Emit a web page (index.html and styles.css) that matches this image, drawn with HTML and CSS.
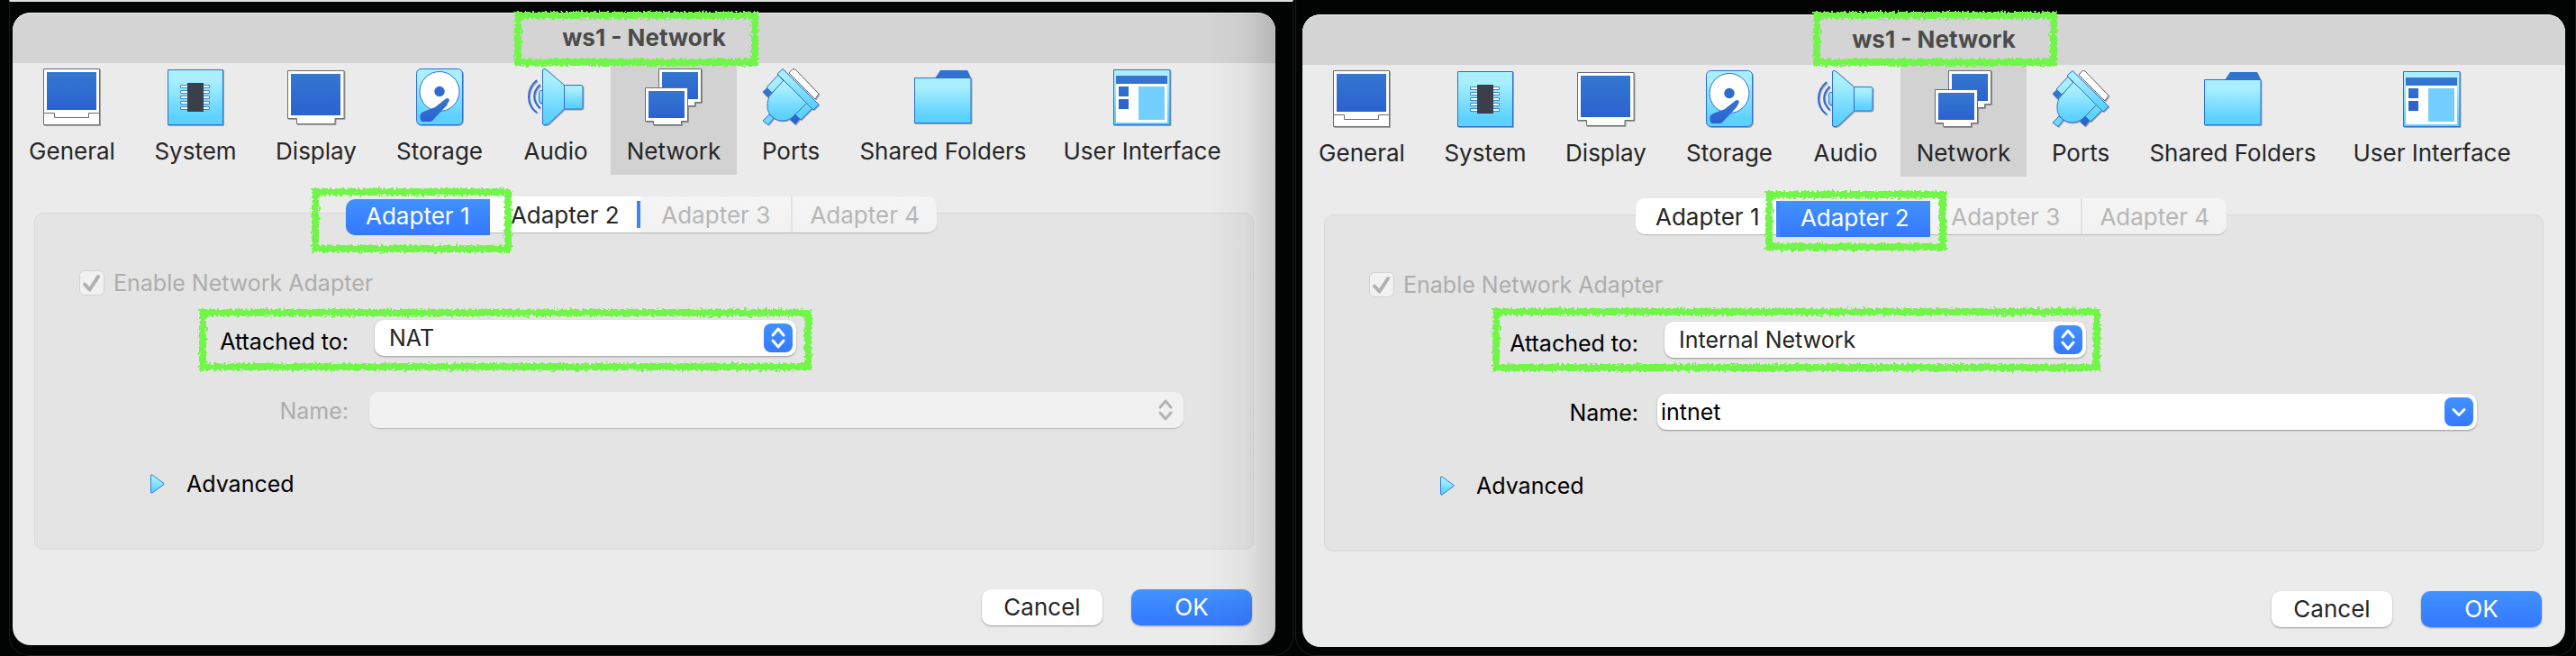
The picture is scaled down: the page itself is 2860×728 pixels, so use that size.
FILE: index.html
```html
<!DOCTYPE html>
<html lang="en">
<head>
<meta charset="utf-8">
<title>ws1 - Network</title>
<link rel="stylesheet" href="styles.css">
</head>
<body>
<svg class="sprite" width="0" height="0" aria-hidden="true">
  <defs>
    <linearGradient id="cyan" x1="0" y1="0" x2="0" y2="1"><stop offset="0.2" stop-color="#a9efff"/><stop offset="0.85" stop-color="#5dd2ff"/></linearGradient>
    <linearGradient id="blue" x1="0" y1="0" x2="0" y2="1"><stop offset="0" stop-color="#3577d0"/><stop offset="1" stop-color="#2a62d0"/></linearGradient>
    <filter id="rough" x="-5%" y="-20%" width="110%" height="140%">
      <feTurbulence type="fractalNoise" baseFrequency="0.35" numOctaves="2" seed="4" result="n"/>
      <feDisplacementMap in="SourceGraphic" in2="n" scale="7" xChannelSelector="R" yChannelSelector="G"/>
    </filter>
  </defs>
  <symbol id="i-general" viewBox="0 0 64 64">
    <path d="M.5.5h62v62H.5z" fill="#fff" stroke="#6c6c6c"/>
    <path d="M4 4h55v42H4z" fill="url(#blue)"/>
    <path d="M.5 49.5h12v5h38v-5h12" fill="none" stroke="#6c6c6c"/>
  </symbol>
  <symbol id="i-system" viewBox="0 0 64 64">
    <path d="M1.500 1.500h61v61h-61z" fill="url(#cyan)" stroke="#2a6fd2"/>
    <path d="M15.500 18.500h32v3h-32zM15.500 24.500h32v3h-32zM15.500 30.500h32v3h-32zM15.500 36.500h32v3h-32zM15.500 42.500h32v3h-32z" fill="#fff" stroke="#3c86c8"/>
    <path d="M23 16h18v32H23z" fill="#3a3f4a"/>
  </symbol>
  <symbol id="i-display" viewBox="0 0 64 64">
    <path d="M.5 2.500h62.500v53H53v6H10.500v-6H.5z" fill="#fff" stroke="#6c6c6c"/>
    <path d="M4 6h55v46H4z" fill="url(#blue)"/>
  </symbol>
  <symbol id="i-storage" viewBox="0 0 64 64">
    <rect x="6.500" y=".5" width="51" height="62" rx="5" fill="url(#cyan)" stroke="#2a6fd2"/>
    <circle cx="32" cy="25.500" r="22" fill="#fff" stroke="#2a6fd2"/>
    <circle cx="32" cy="25.500" r="5.700" fill="#2d6bd2"/>
    <path d="M39 33.500Q42 32 43 35L40 41 24 58Q23 59 21 59H13Q10 58 10.500 52 11 49 14 48L27 43Z" fill="url(#blue)"/>
  </symbol>
  <symbol id="i-audio" viewBox="0 0 64 64">
    <path d="M11 13C-1 23-1 40 11 49M14.500 18C6 26 6 36 14.500 44" fill="none" stroke="#2d6bd2" stroke-width="2"/>
    <path d="M17.500 24.500H16Q13.500 24.500 13.500 27V36Q13.500 38.500 16 38.500H17.500M41.500 18.500H60Q62 18.500 62 20.500V43Q62 45 60 45H41.500Z" fill="url(#cyan)" stroke="#2a6fd2"/>
    <path d="M17.500 2Q17.500.5 19 .5H20L23 2.500 41.500 18.500V45L24 61.500 21 62.500H19Q17.500 62.500 17.500 61Z" fill="url(#cyan)" stroke="#2a6fd2"/>
  </symbol>
  <symbol id="i-network" viewBox="0 0 64 64">
    <path d="M15.500.5h47v37h-7v4h-32v-4h-8z" fill="#fff" stroke="#6c6c6c"/>
    <path d="M19 4h40v30H19z" fill="url(#blue)"/>
    <path d="M.5 21.500h47v37h-7v4h-31v-4H.5z" fill="#fff" stroke="#6c6c6c"/>
    <path d="M4 25h40v30H4z" fill="url(#blue)"/>
  </symbol>
  <symbol id="i-ports" viewBox="0 0 64 64">
    <path d="M34 .5 37 1 63 28 59 34 30 5Z" fill="#fff" stroke="#6c6c6c"/>
    <path d="M7 20 12 26 6 32 .5 26ZM37 50 43 55 37 62.500 31 57Z" fill="url(#blue)"/>
    <path d="M8 51 13 55 7 62.500 1 58Z" fill="#73d8ff" stroke="#2a6fd2"/>
    <path d="M18 7 5 21 11 27 24 14ZM50 38 56 44 43 57 37 51Z" fill="url(#cyan)" stroke="#2a6fd2"/>
    <path d="M24 13 8 31C4 41 6 51 13 55 20 60 29 58 34 54L50 38Z" fill="url(#cyan)" stroke="#2a6fd2"/>
    <path d="M23 .5 17 6 57 46 63 40Z" fill="url(#cyan)" stroke="#2a6fd2"/>
  </symbol>
  <symbol id="i-folders" viewBox="0 0 64 64">
    <path d="M23 11 29 2H59L63 11Z" fill="#3072cf"/>
    <path d="M.5 10.500h62.500v50H.5z" fill="url(#cyan)" stroke="#2a6fd2"/>
  </symbol>
  <symbol id="i-ui" viewBox="0 0 64 64">
    <path d="M.5 1.500h62.500v61H.5z" fill="url(#cyan)" stroke="#2a6fd2"/>
    <path d="M3 17h57v43H3z" fill="#fff"/>
    <path d="M3 8h57v9H3zM6 20h11v11H6zM6 34h11v11H6z" fill="url(#blue)"/>
    <path d="M28 20h29v37H28z" fill="#73cfff"/>
  </symbol>
  <symbol id="i-updown" viewBox="0 0 32 32">
    <path d="M10 13l6-7 6 7M10 19l6 7 6-7" fill="none" stroke="currentColor" stroke-width="3" stroke-linecap="round" stroke-linejoin="round"/>
  </symbol>
  <symbol id="i-down" viewBox="0 0 32 32">
    <path d="M10 13.500l6 6 6-6" fill="none" stroke="currentColor" stroke-width="3" stroke-linecap="round" stroke-linejoin="round"/>
  </symbol>
  <symbol id="i-check" viewBox="0 0 28 28">
    <path d="M6 15.500l5.500 6L21 7" fill="none" stroke="currentColor" stroke-width="4" stroke-linecap="round" stroke-linejoin="round"/>
  </symbol>
  <symbol id="i-play" viewBox="0 0 16 22">
    <path d="M.5 2Q.5.500 2 1L15 10.500Q15.500 11 15 11.500L2 21Q.5 21.500.5 20Z" fill="url(#cyan)" stroke="#2a7fe8"/>
  </symbol>
</svg>
<main class="desktop">
  <div class="shell shell-first">
    <section class="window" aria-label="Network settings, adapter 1">
      <h1 class="titlebar">ws1 - Network</h1>
      <nav class="toolbar">
        <button class="tool"><svg class="tool-icon"><use href="#i-general"/></svg>General</button>
        <button class="tool"><svg class="tool-icon"><use href="#i-system"/></svg>System</button>
        <button class="tool"><svg class="tool-icon"><use href="#i-display"/></svg>Display</button>
        <button class="tool"><svg class="tool-icon"><use href="#i-storage"/></svg>Storage</button>
        <button class="tool"><svg class="tool-icon"><use href="#i-audio"/></svg>Audio</button>
        <button class="tool tool-active"><svg class="tool-icon"><use href="#i-network"/></svg>Network</button>
        <button class="tool"><svg class="tool-icon"><use href="#i-ports"/></svg>Ports</button>
        <button class="tool"><svg class="tool-icon"><use href="#i-folders"/></svg>Shared Folders</button>
        <button class="tool"><svg class="tool-icon"><use href="#i-ui"/></svg>User Interface</button>
      </nav>
      <div class="tabs">
        <button class="tab tab-selected">Adapter 1</button>
        <button class="tab tab-edge">Adapter 2</button>
        <button class="tab" disabled>Adapter 3</button>
        <button class="tab" disabled>Adapter 4</button>
      </div>
      <div class="panel">
        <label class="enable"><input class="check" type="checkbox" checked disabled><svg class="check-mark"><use href="#i-check"/></svg>Enable Network Adapter</label>
        <div class="row row-attached">
          <label class="label" for="attached-1">Attached to:</label>
          <div class="field field-select">
            <select class="control" id="attached-1"><option>NAT</option></select>
            <svg class="knob knob-blue"><use href="#i-updown"/></svg>
          </div>
        </div>
        <div class="row row-name">
          <label class="label label-disabled" for="name-1">Name:</label>
          <div class="field field-name">
            <select class="control control-disabled" id="name-1" disabled><option></option></select>
            <svg class="knob knob-gray"><use href="#i-updown"/></svg>
          </div>
        </div>
        <button class="advanced"><svg class="advanced-icon"><use href="#i-play"/></svg>Advanced</button>
      </div>
      <footer class="actions">
        <button class="action">Cancel</button>
        <button class="action action-primary">OK</button>
      </footer>
      <span class="mark mark-title-1"></span>
      <span class="mark mark-tab-1"></span>
      <span class="mark mark-row-1"></span>
    </section>
  </div>
  <div class="shell shell-second">
    <section class="window" aria-label="Network settings, adapter 2">
      <h1 class="titlebar">ws1 - Network</h1>
      <nav class="toolbar">
        <button class="tool"><svg class="tool-icon"><use href="#i-general"/></svg>General</button>
        <button class="tool"><svg class="tool-icon"><use href="#i-system"/></svg>System</button>
        <button class="tool"><svg class="tool-icon"><use href="#i-display"/></svg>Display</button>
        <button class="tool"><svg class="tool-icon"><use href="#i-storage"/></svg>Storage</button>
        <button class="tool"><svg class="tool-icon"><use href="#i-audio"/></svg>Audio</button>
        <button class="tool tool-active"><svg class="tool-icon"><use href="#i-network"/></svg>Network</button>
        <button class="tool"><svg class="tool-icon"><use href="#i-ports"/></svg>Ports</button>
        <button class="tool"><svg class="tool-icon"><use href="#i-folders"/></svg>Shared Folders</button>
        <button class="tool"><svg class="tool-icon"><use href="#i-ui"/></svg>User Interface</button>
      </nav>
      <div class="tabs">
        <button class="tab">Adapter 1</button>
        <button class="tab tab-selected">Adapter 2</button>
        <button class="tab" disabled>Adapter 3</button>
        <button class="tab" disabled>Adapter 4</button>
      </div>
      <div class="panel">
        <label class="enable"><input class="check" type="checkbox" checked disabled><svg class="check-mark"><use href="#i-check"/></svg>Enable Network Adapter</label>
        <div class="row row-attached">
          <label class="label" for="attached-2">Attached to:</label>
          <div class="field field-select">
            <select class="control" id="attached-2"><option>Internal Network</option></select>
            <svg class="knob knob-blue"><use href="#i-updown"/></svg>
          </div>
        </div>
        <div class="row row-name">
          <label class="label" for="name-2">Name:</label>
          <div class="field field-combo">
            <input class="control control-text" id="name-2" type="text" value="intnet">
            <svg class="knob knob-blue"><use href="#i-down"/></svg>
          </div>
        </div>
        <button class="advanced"><svg class="advanced-icon"><use href="#i-play"/></svg>Advanced</button>
      </div>
      <footer class="actions">
        <button class="action">Cancel</button>
        <button class="action action-primary">OK</button>
      </footer>
      <span class="mark mark-title-2"></span>
      <span class="mark mark-tab-2"></span>
      <span class="mark mark-row-2"></span>
    </section>
  </div>
</main>
</body>
</html>
```
FILE: styles.css
```css
* { box-sizing: border-box; }

body {
  margin: 0;
  background: #020303;
  color: #262626;
  font: 26px/32px Inter, "Liberation Sans", sans-serif;
}

button, input, select {
  margin: 0;
  padding: 0;
  border: 0;
  background: none;
  color: inherit;
  font: inherit;
}

.sprite { position: absolute; }

.desktop {
  display: grid;
  grid-template-columns: 1426fr 1422fr;
  gap: 2px;
  min-height: 100vh;
  padding-left: 10px;
}

.shell {
  border: 1px solid #1b1b1b;
  border-top: 0;
  border-radius: 0 0 22px 22px;
}

.shell-first {
  padding: 12px 19px 11px 3px;
  border-top: 2px solid #dedede;
}

.shell-second {
  padding: 16px 11px 9px 7px;
}

.window {
  position: relative;
  border-radius: 20px;
  background: #ebebeb;
}

.shell-first .window::after {
  content: "";
  position: absolute;
  inset: 0 0 0 auto;
  width: 76px;
  border-radius: 0 20px 20px 0;
  background: linear-gradient(90deg, rgba(0, 0, 0, 0), rgba(0, 0, 0, 0.04) 55%, rgba(0, 0, 0, 0.14));
  pointer-events: none;
}

.titlebar {
  margin: 0;
  height: 56px;
  border-top: 1px solid #f2f2f2;
  border-radius: 20px 20px 0 0;
  background: #d4d4d4;
  color: #4b4b4b;
  font-size: 26px;
  font-weight: 700;
  line-height: 54px;
  text-align: center;
}

.toolbar {
  display: grid;
  grid-template-columns: 132fr 130fr 126fr 136fr 110fr 140fr 108fr 218fr 212fr;
  gap: 6px;
  margin-right: 42px;
}

.tool {
  display: flex;
  flex-direction: column;
  align-items: center;
  gap: 12px;
  padding: 6px 0 10px;
  white-space: nowrap;
}

.tool-active { background: #d2d2d2; }

.tool-icon {
  width: 64px;
  height: 64px;
  filter: drop-shadow(1px 1px 0 rgba(0, 0, 0, 0.3));
}

.tabs {
  position: relative;
  display: flex;
  width: 656px;
  height: 40px;
  margin: 24px 0 -22px calc(50% - 331px);
  border-radius: 10px;
  box-shadow: 0 1px 1px rgba(0, 0, 0, 0.2);
}

.tab {
  flex: 168 0 0;
  height: 40px;
  padding-top: 2px;
  background: #fff;
  white-space: nowrap;
}

.tab:first-child {
  flex-grow: 160;
  border-radius: 10px 0 0 10px;
}

.tab:last-child {
  flex-grow: 160;
  border-left: 2px solid #e2e2e2;
  border-radius: 0 10px 10px 0;
}

.tab:disabled {
  background: linear-gradient(#f5f5f5, #f1f1f1);
  color: #b6b6b6;
}

.tab.tab-selected {
  margin-top: 3px;
  padding: 0 0 3px;
  background: linear-gradient(#4192ff, #3478ff);
  color: #fff;
}

.tab-selected:not(:first-child) {
  box-shadow: -4px 0 #3c86ff;
}

.tab-edge {
  background: linear-gradient(#3a84ff, #3a84ff) right center / 4px 30px no-repeat #fff;
}

.panel {
  margin: 0 24px;
  padding: 63px 77px 56px 0;
  border: 1px solid #d9d9d9;
  border-radius: 10px;
  background: #e4e4e4;
  font-size: 25px;
}

.enable {
  position: relative;
  display: flex;
  align-items: center;
  gap: 10px;
  height: 28px;
  margin-left: 49px;
  color: #adadad;
}

.check {
  appearance: none;
  width: 28px;
  height: 28px;
  border: 1px solid #d2d2d2;
  border-radius: 6px;
  background: #f1f1f1;
}

.check-mark {
  position: absolute;
  left: 0;
  width: 28px;
  height: 28px;
  color: #b0b0b0;
}

.row {
  display: flex;
  align-items: center;
}

.row-attached {
  align-items: flex-end;
  margin-top: 27px;
}

.row-name { margin-top: 40px; }

.label {
  flex: 0 0 348px;
  color: #000;
  text-align: right;
}

.row-name .label { padding-top: 2px; }

.label-disabled { color: #adadad; }

.field { position: relative; }

.field-select {
  width: 468px;
  margin-left: 29px;
}

.field-name {
  flex: 1;
  margin-left: 23px;
}

.field-combo {
  flex: 1;
  margin: 0 -4px 0 21px;
}

.control {
  appearance: none;
  display: block;
  width: 100%;
  height: 40px;
  padding: 0 48px 0 16px;
  border-radius: 10px;
  background: #fff;
  color: #262626;
  box-shadow: 0 1px 2px rgba(0, 0, 0, 0.35);
}

.control-text {
  padding-left: 4px;
  color: #000;
}

.control-disabled {
  background: #f1f1f1;
  opacity: 1;
  box-shadow: 0 1px 1px rgba(0, 0, 0, 0.2);
}

.knob {
  position: absolute;
  top: 4px;
  right: 4px;
  width: 32px;
  height: 32px;
  border-radius: 8px;
  pointer-events: none;
}

.knob-blue {
  background: linear-gradient(#4192ff, #3478ff);
  color: #fff;
}

.knob-gray { color: #b3b3b3; }

.advanced {
  display: flex;
  align-items: center;
  gap: 24px;
  margin: 46px 0 0 128px;
  color: #000;
}

.advanced-icon {
  width: 16px;
  height: 22px;
}

.actions {
  display: flex;
  justify-content: flex-end;
  gap: 32px;
  padding: 44px 26px 22px;
}

.action {
  width: 134px;
  height: 40px;
  border-radius: 10px;
  background: #fff;
  box-shadow: 0 1px 2px rgba(0, 0, 0, 0.35);
}

.action-primary {
  background: linear-gradient(#4192ff, #3478ff);
  color: #fff;
}

/* Hand-drawn highlight frames over the dialogs */
.mark {
  position: absolute;
  z-index: 2;
  border: 8px solid #71f549;
  filter: url(#rough);
  pointer-events: none;
}

.mark-title-1 { left: 557px; top: -1px; width: 271px; height: 60px; }
.mark-tab-1 { left: 332px; top: 195px; width: 222px; height: 71px; }
.mark-row-1 { left: 207px; top: 329px; width: 680px; height: 68px; }
.mark-title-2 { left: 567px; top: -3px; width: 271px; height: 60px; }
.mark-tab-2 { left: 514px; top: 196px; width: 201px; height: 66px; }
.mark-row-2 { left: 211px; top: 326px; width: 675px; height: 70px; }
```
